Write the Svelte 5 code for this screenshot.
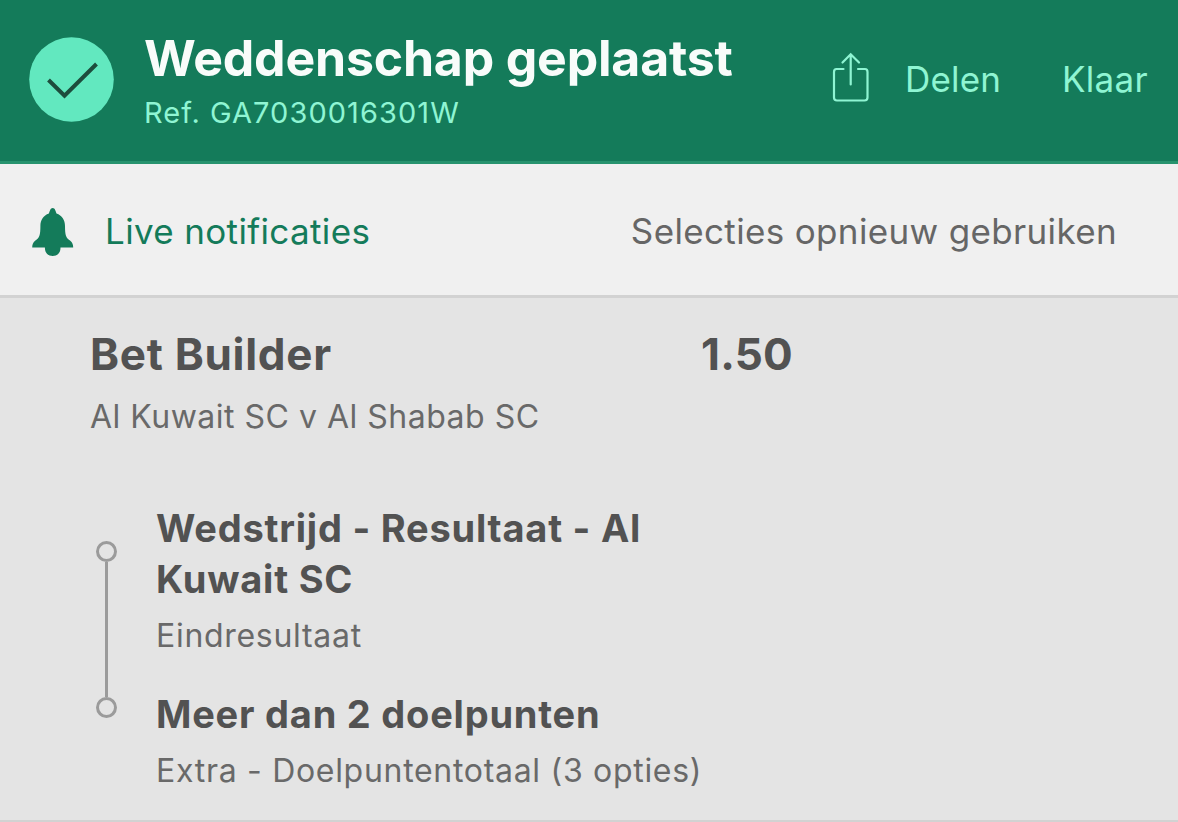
<script>
	const receipt = {
		title: 'Weddenschap geplaatst',
		ref: 'GA7030016301W',
		type: 'Bet Builder',
		odds: '1.50',
		fixture: 'Al Kuwait SC v Al Shabab SC'
	};

	const selections = [
		{ name: 'Wedstrijd - Resultaat - Al Kuwait SC', market: 'Eindresultaat' },
		{ name: 'Meer dan 2 doelpunten', market: 'Extra - Doelpuntentotaal (3 opties)' }
	];
</script>

<div class="receipt">
	<header class="header">
		<svg class="check" viewBox="0 0 85 85">
			<circle cx="42.5" cy="42.5" r="42.3" />
			<path d="M19.5 43 L35.5 58.7 L67.5 27" />
		</svg>
		<div class="heading">
			<h1>{receipt.title}</h1>
			<p class="ref">Ref. {receipt.ref}</p>
		</div>
		<button class="share">
			<svg viewBox="0 0 38 50">
				<path d="M11.5 17 H4.5 Q2 17 2 20 V45.5 Q2 48.5 5 48.5 H32.5 Q35.5 48.5 35.5 45.5 V20 Q35.5 17 33 17 H26" />
				<path d="M18.7 32.5 V2.5 M10.5 10.5 L18.7 2.3 L27 10.5" />
			</svg>
			<span>Delen</span>
		</button>
		<button class="done">Klaar</button>
	</header>

	<div class="actions">
		<button class="notify">
			<svg viewBox="0 0 42 48">
				<path d="M20.7 0 C23 0 23.5 3 24.5 5.5 C30 7.5 33 12 33 18 C33 27 34 30 38 32.5 C40.5 34.5 41.2 36.5 41.2 39.5 H28.5 C28.5 45 25.5 48 20.7 48 C15.9 48 12.9 45 12.9 39.5 H0.2 C0.2 36.5 0.9 34.5 3.4 32.5 C7.4 30 8.4 27 8.4 18 C8.4 12 11.4 7.5 16.9 5.5 C17.9 3 18.4 0 20.7 0 Z" />
			</svg>
			<span>Live notificaties</span>
		</button>
		<button class="reuse">Selecties opnieuw gebruiken</button>
	</div>

	<section class="bet">
		<div class="bet-head">
			<h2>{receipt.type}</h2>
			<span class="odds">{receipt.odds}</span>
		</div>
		<p class="fixture">{receipt.fixture}</p>
		<div class="builder">
			<div class="rail">
				<i class="dot"></i>
				<i class="line"></i>
				<i class="dot"></i>
			</div>
			<ul class="selections">
				{#each selections as selection}
					<li>
						<h3>{selection.name}</h3>
						<p>{selection.market}</p>
					</li>
				{/each}
			</ul>
		</div>
	</section>
</div>

<style>
	:global(body) { margin: 0; background: #e4e4e4; }
	.receipt { box-sizing: border-box; width: 1178px; height: 822px; overflow: hidden; display: flex; flex-direction: column; background: #e4e4e4; font-family: Inter, sans-serif; color: #525252; }
	h1, h2, h3, p, ul { margin: 0; padding: 0; }
	button { border: 0; padding: 0; background: none; font: inherit; letter-spacing: inherit; color: inherit; white-space: nowrap; cursor: pointer; }

	.header { box-sizing: border-box; flex: none; height: 164px; display: flex; align-items: flex-start; padding: 0 30px 0 29px; background: #147b5a; border-bottom: 3px solid #27936e; color: #8ff5d3; }
	.check { width: 85px; height: 85px; margin-top: 37px; flex: none; }
	.check circle { fill: #62e8bf; }
	.check path { fill: none; stroke: #1d4d3d; stroke-width: 4; }
	.heading { margin: 28px 0 0 30px; width: 688px; white-space: nowrap; }
	h1 { color: #f8fcfa; font-size: 50px; line-height: 60px; font-weight: 700; letter-spacing: -0.2px; }
	.ref { font-size: 29px; line-height: 36px; margin-top: 7px; letter-spacing: 1.05px; }
	.share { display: flex; align-items: center; gap: 35px; margin-top: 52px; height: 54px; font-size: 35px; letter-spacing: 0.2px; }
	.share svg { width: 38px; height: 50px; margin-bottom: 5px; fill: none; stroke: #8ff5d3; stroke-width: 2.2; stroke-linecap: round; }
	.done { margin: 52px 0 0 auto; height: 54px; font-size: 35px; letter-spacing: 0.3px; }

	.actions { box-sizing: border-box; flex: none; height: 134px; display: flex; align-items: center; justify-content: space-between; padding: 3px 61px 0 32px; background: #f0f0f0; border-bottom: 3px solid #d2d2d2; font-size: 35px; letter-spacing: 0.35px; }
	.notify { display: flex; align-items: center; gap: 31px; color: #147b5a; }
	.notify svg { width: 42px; height: 48px; margin-top: 1px; fill: #147b5a; }
	.reuse { color: #666; }

	.bet { flex: 1; min-height: 0; padding: 29px 0 0 90px; border-bottom: 2px solid #d2d2d2; }
	.bet-head { display: flex; align-items: center; height: 54px; }
	h2 { width: 611px; font-size: 44px; font-weight: 700; letter-spacing: 0.7px; }
	.odds { font-size: 44px; font-weight: 700; letter-spacing: 0.2px; }
	.fixture { margin-top: 16px; font-size: 32px; line-height: 40px; letter-spacing: 0.5px; color: #696969; }
	.builder { display: flex; gap: 39px; margin-top: 66px; }
	.rail { display: flex; flex-direction: column; align-items: center; width: 21px; height: 177px; margin: 38px 0 0 6px; }
	.dot { box-sizing: border-box; flex: none; width: 21px; height: 21px; border: 3px solid #9b9b9b; border-radius: 50%; }
	.line { flex: 1; width: 3px; background: #9b9b9b; }
	.selections { width: 600px; list-style: none; }
	li { padding-bottom: 33px; }
	h3 { width: 520px; font-size: 38px; line-height: 51px; font-weight: 700; letter-spacing: 0.78px; }
	li p { margin-top: 11px; font-size: 32px; line-height: 40px; letter-spacing: 0.7px; color: #696969; white-space: nowrap; }
</style>
